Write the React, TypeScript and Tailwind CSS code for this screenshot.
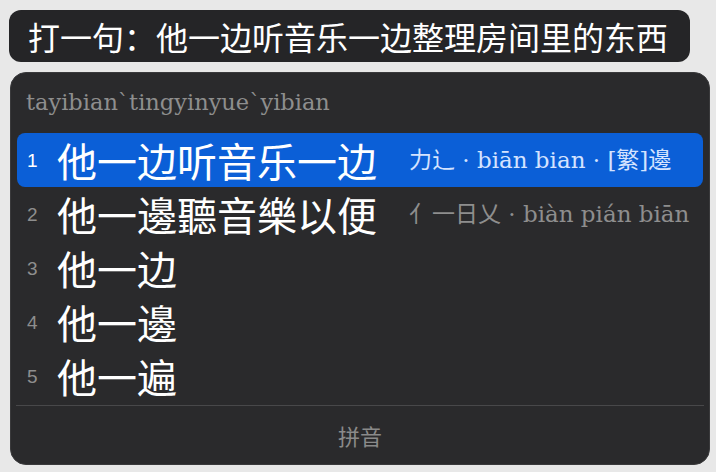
interface Candidate {
  text: string;
  comment?: string;
}

const candidates: Candidate[] = [
  { text: '他一边听音乐一边', comment: '力辶 · biān bian · [繁]邊' },
  { text: '他一邊聽音樂以便', comment: '亻一日乂 · biàn pián biān' },
  { text: '他一边' },
  { text: '他一邊' },
  { text: '他一遍' },
];

export default function App() {
  const selected = 0;

  return (
    <div className="w-[716px] h-[472px] bg-[#e8e8e8] pt-[10px] pl-[9px] overflow-hidden font-['Noto_Sans_CJK_SC','Noto_Sans',sans-serif]">
      <div className="w-[681px] h-[52px] rounded-[12px] bg-[#252527] text-white text-[32px] leading-[52px] pl-[19px] whitespace-nowrap">
        打一句：他一边听音乐一边整理房间里的东西
      </div>

      <div className="mt-[10px] ml-[1px] w-[700px] h-[393px] rounded-[16px] bg-[#2a2a2c] border border-[#3a3a3c] flex flex-col">
        <div className="h-[60px] pl-[15px] pt-[13px] text-[22.5px] leading-[32px] text-[#8e8e8e] font-['DejaVu_Serif','Noto_Sans_CJK_SC',serif]">
          tayibian`tingyinyue`yibian
        </div>

        <div className="flex flex-col px-[6px]">
          {candidates.map((c, i) => {
            const active = i === selected;
            return (
              <div
                key={i}
                className={`h-[54px] flex items-center pl-[10px] rounded-[8px] ${
                  active ? 'bg-[#0b5fd7]' : ''
                }`}
              >
                <span
                  className={`w-[30px] pt-[2px] text-[19px] font-['Liberation_Sans',sans-serif] ${
                    active ? 'text-white' : 'text-[#8e8e8e]'
                  }`}
                >
                  {i + 1}
                </span>
                <span className="text-white text-[40px] leading-[54px] whitespace-nowrap">
                  {c.text}
                </span>
                {c.comment && (
                  <span
                    className={`ml-[32px] text-[23px] whitespace-nowrap font-['DejaVu_Serif','Noto_Sans_CJK_SC',serif] ${
                      active ? 'text-[#d4e3ff]' : 'text-[#8e8e8e]'
                    }`}
                  >
                    {c.comment}
                  </span>
                )}
              </div>
            );
          })}
        </div>

        <div className="mt-[2px] mx-[5px] border-t border-[#48484a]" />
        <div className="flex-1 flex items-center justify-center text-[22px] text-[#8a8a8a]">
          拼音
        </div>
      </div>
    </div>
  );
}
